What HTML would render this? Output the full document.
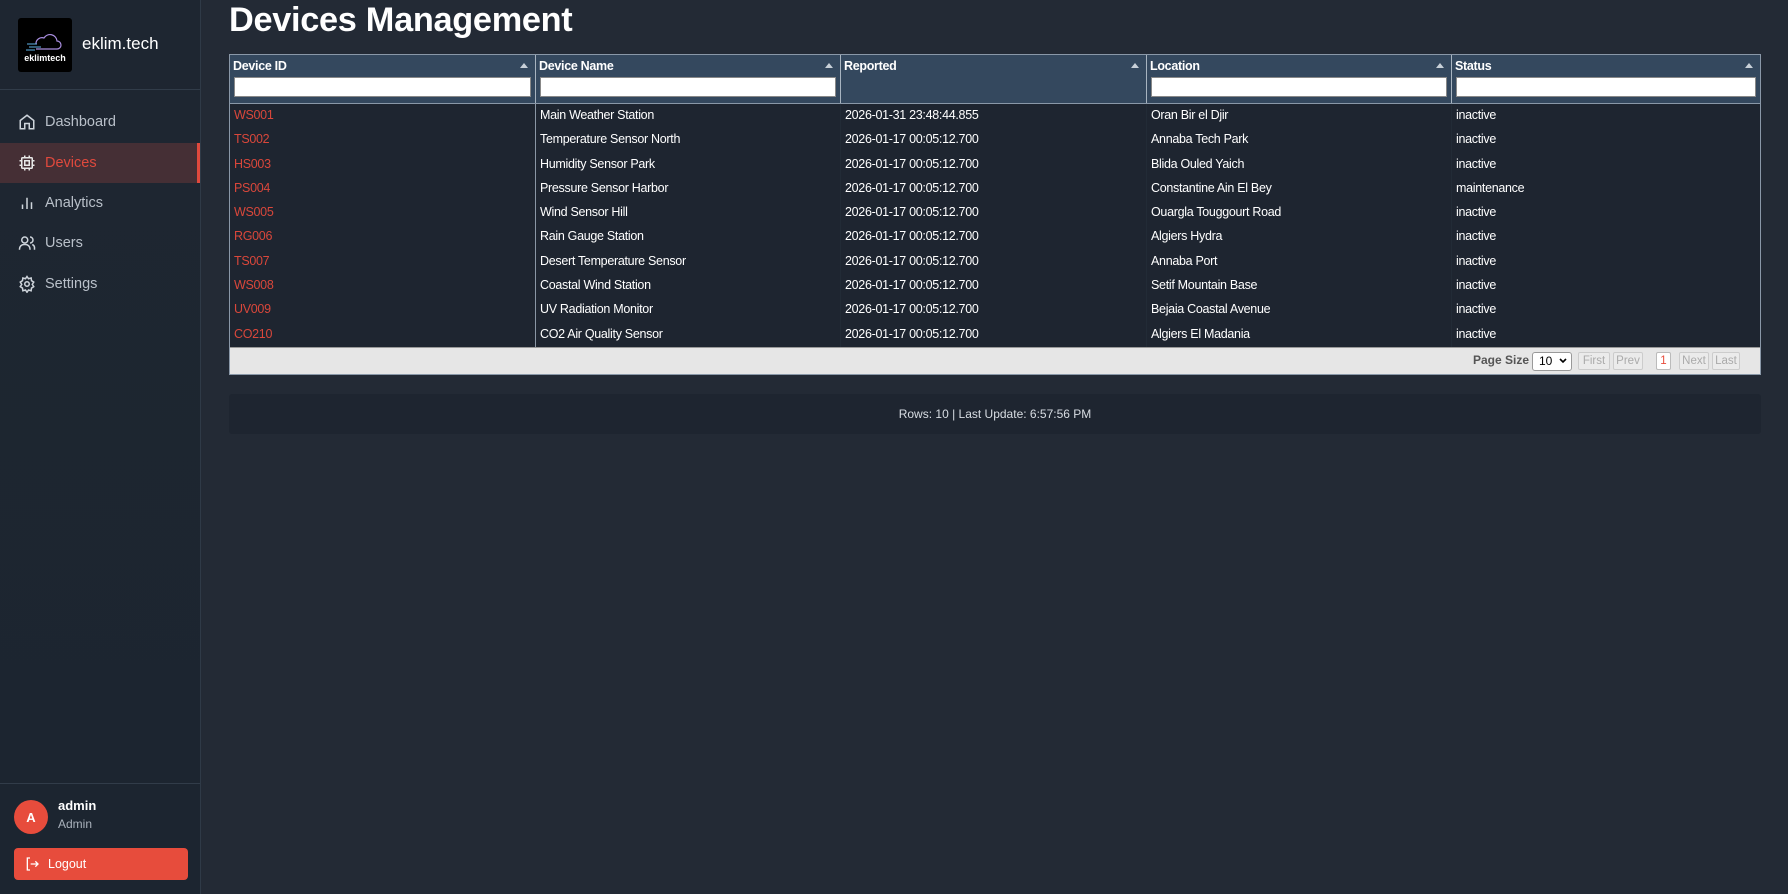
<!DOCTYPE html>
<html><head><meta charset="utf-8">
<style>
*{box-sizing:border-box;margin:0;padding:0}
body{width:1788px;height:894px;background:#232a35;font-family:"Liberation Sans",Arial,sans-serif;position:relative;overflow:hidden;color:#fff}
.sb{position:absolute;left:0;top:0;width:201px;height:894px;background:linear-gradient(180deg,#1e2631,#1c2530);border-right:1px solid #2f3a47}
.logo{position:absolute;left:18px;top:18px;width:54px;height:54px;background:#000;border-radius:3px}
.brand{position:absolute;left:82px;top:34px;font-size:17px;color:#fff}
.div1{position:absolute;left:0;top:89px;width:200px;height:1px;background:#313c49}
.nav{position:absolute;left:0;width:200px;height:40px;display:flex;align-items:center;font-size:14.5px;color:#b9c0c9}
.nav svg{position:absolute;left:18px;width:18px;height:18px}
.nav span{position:absolute;left:45px}
.nav.act{background:#452f35;color:#e0493d;border-right:3px solid #e0493d}
.div2{position:absolute;left:0;top:783px;width:200px;height:1px;background:#313c49}
.av{position:absolute;left:14px;top:800px;width:34px;height:34px;border-radius:50%;background:#e74c3c;font-size:13px;font-weight:bold;display:flex;align-items:center;justify-content:center}
.un{position:absolute;left:58px;top:798px;font-size:13px;font-weight:bold}
.ur{position:absolute;left:58px;top:817px;font-size:12px;color:#aab2bc}
.lo{position:absolute;left:14px;top:848px;width:174px;height:32px;background:#e74c3c;border-radius:4px;font-size:12.5px;display:flex;align-items:center}
.lo span{position:absolute;left:34px}
h1{position:absolute;left:229px;top:0;font-size:34.3px;font-weight:bold;letter-spacing:-.3px;line-height:40px}
.tbl{position:absolute;left:229px;top:54px;width:1532px;border:1px solid #8a98a8}
.hd{height:49px;background:#34485e;display:flex;border-bottom:1px solid #8a98a8}
.hc{position:relative;height:100%;border-right:1px solid #a8b4c0;padding:2px 3px}
.hc:last-child{border-right:none}
.hc b{font-size:12.5px;letter-spacing:-.3px}
.hc i{position:absolute;right:7px;top:8px;width:0;height:0;border-left:4px solid transparent;border-right:4px solid transparent;border-bottom:5px solid #c8d0d8}
.hc .in{position:absolute;left:4px;right:4px;top:22px;height:20px;background:#fff;border:1px solid #888}
.row{height:24.3px;display:flex;background:#1e2530;font-size:12.5px;letter-spacing:-.3px}
.row div{padding-left:4px;line-height:22px;border-right:1px solid #222b36;white-space:nowrap}
.row div:first-child{color:#d9473b;border-right:1px solid #8a96a4}
.row div:last-child{border-right:none}
.c1{width:306px}.c2{width:305px}.c3{width:306px}.c4{width:305px}.c5{flex:1}
.pg{height:27px;background:#e6e6e6;border-top:1px solid #999;position:relative;font-size:12px;color:#444}
.pg>*{position:absolute;top:4px}
.bt{height:18px;border:1px solid #ccc;border-radius:2px;color:#aaa;font-size:11.5px;line-height:16px;text-align:center;background:#ebebeb}
.sel{display:flex;align-items:center;justify-content:space-between}
.st{position:absolute;left:229px;top:394px;width:1532px;height:40px;background:#1e2530;font-size:12px;color:#d8dde3;text-align:center;line-height:40px;border-radius:3px}
</style></head><body>
<div class="sb">
 <div class="logo"><svg width="54" height="54" viewBox="0 0 54 54"><path d="M18 26 a6 6 0 0 1 8-6 a7 7 0 0 1 13 3 a4 4 0 0 1 0 8 h-21" fill="none" stroke="#a98ee0" stroke-width="1.2"/><path d="M9 26h10M11 29h12M8 32h9" stroke="#5fb4e8" stroke-width="1"/><text x="27" y="43" font-size="9" font-weight="bold" fill="#fff" text-anchor="middle" font-family="Liberation Sans">eklimtech</text></svg></div>
 <div class="brand">eklim.tech</div>
 <div class="div1"></div>
 <div class="nav" style="top:102px"><svg viewBox="0 0 24 24" fill="none" stroke="#cfd5dc" stroke-width="2"><path d="M3 10l9-7 9 7v11h-6v-7H9v7H3z"/></svg><span>Dashboard</span></div>
 <div class="nav act" style="top:143px"><svg viewBox="0 0 24 24" fill="none" stroke="#e8e8e8" stroke-width="2"><rect x="5" y="5" width="14" height="14" rx="1"/><rect x="9" y="9" width="6" height="6"/><path d="M9 2v3M15 2v3M9 19v3M15 19v3M2 9h3M2 15h3M19 9h3M19 15h3"/></svg><span>Devices</span></div>
 <div class="nav" style="top:183px"><svg viewBox="0 0 24 24" fill="none" stroke="#cfd5dc" stroke-width="2"><path d="M6 20v-6M12 20V5M18 20v-9"/></svg><span>Analytics</span></div>
 <div class="nav" style="top:223px"><svg viewBox="0 0 24 24" fill="none" stroke="#cfd5dc" stroke-width="2"><circle cx="9" cy="8" r="4"/><path d="M2 21v-1a6 6 0 0 1 6-6h2a6 6 0 0 1 6 6v1M16 4a4 4 0 0 1 0 8M19 14a5 5 0 0 1 3 5v2"/></svg><span>Users</span></div>
 <div class="nav" style="top:264px"><svg viewBox="0 0 24 24" fill="none" stroke="#cfd5dc" stroke-width="2"><circle cx="12" cy="12" r="3"/><path d="M12 2l2 3 3.5-1 .5 3.5 3 2-2 3 2 3-3 2-.5 3.5-3.5-1-2 3-2-3-3.5 1-.5-3.5-3-2 2-3-2-3 3-2 .5-3.5 3.5 1z"/></svg><span>Settings</span></div>
 <div class="div2"></div>
 <div class="av">A</div>
 <div class="un">admin</div>
 <div class="ur">Admin</div>
 <div class="lo"><svg style="position:absolute;left:10px" width="16" height="16" viewBox="0 0 24 24" fill="none" stroke="#fff" stroke-width="2"><path d="M9 3H5v18h4M10 12h11M17 8l4 4-4 4"/></svg><span>Logout</span></div>
</div>
<h1>Devices Management</h1>
<div class="tbl">
 <div class="hd">
  <div class="hc c1"><b>Device ID</b><i></i><div class="in"></div></div>
  <div class="hc c2"><b>Device Name</b><i></i><div class="in"></div></div>
  <div class="hc c3"><b>Reported</b><i></i></div>
  <div class="hc c4"><b>Location</b><i></i><div class="in"></div></div>
  <div class="hc c5"><b>Status</b><i></i><div class="in"></div></div>
 </div>
 <div class="row"><div class="c1">WS001</div><div class="c2">Main Weather Station</div><div class="c3">2026-01-31 23:48:44.855</div><div class="c4">Oran Bir el Djir</div><div class="c5">inactive</div></div>
 <div class="row"><div class="c1">TS002</div><div class="c2">Temperature Sensor North</div><div class="c3">2026-01-17 00:05:12.700</div><div class="c4">Annaba Tech Park</div><div class="c5">inactive</div></div>
 <div class="row"><div class="c1">HS003</div><div class="c2">Humidity Sensor Park</div><div class="c3">2026-01-17 00:05:12.700</div><div class="c4">Blida Ouled Yaich</div><div class="c5">inactive</div></div>
 <div class="row"><div class="c1">PS004</div><div class="c2">Pressure Sensor Harbor</div><div class="c3">2026-01-17 00:05:12.700</div><div class="c4">Constantine Ain El Bey</div><div class="c5">maintenance</div></div>
 <div class="row"><div class="c1">WS005</div><div class="c2">Wind Sensor Hill</div><div class="c3">2026-01-17 00:05:12.700</div><div class="c4">Ouargla Touggourt Road</div><div class="c5">inactive</div></div>
 <div class="row"><div class="c1">RG006</div><div class="c2">Rain Gauge Station</div><div class="c3">2026-01-17 00:05:12.700</div><div class="c4">Algiers Hydra</div><div class="c5">inactive</div></div>
 <div class="row"><div class="c1">TS007</div><div class="c2">Desert Temperature Sensor</div><div class="c3">2026-01-17 00:05:12.700</div><div class="c4">Annaba Port</div><div class="c5">inactive</div></div>
 <div class="row"><div class="c1">WS008</div><div class="c2">Coastal Wind Station</div><div class="c3">2026-01-17 00:05:12.700</div><div class="c4">Setif Mountain Base</div><div class="c5">inactive</div></div>
 <div class="row"><div class="c1">UV009</div><div class="c2">UV Radiation Monitor</div><div class="c3">2026-01-17 00:05:12.700</div><div class="c4">Bejaia Coastal Avenue</div><div class="c5">inactive</div></div>
 <div class="row"><div class="c1">CO210</div><div class="c2">CO2 Air Quality Sensor</div><div class="c3">2026-01-17 00:05:12.700</div><div class="c4">Algiers El Madania</div><div class="c5">inactive</div></div>
 <div class="pg">
  <span style="left:1243px;top:5px;font-weight:bold;font-size:12px;color:#555">Page Size</span>
  <div class="sel" style="left:1302px;width:40px;height:19px;background:#fff;border:1px solid #999;border-radius:3px;font-size:12px;color:#000;padding:0 4px 0 6px"><span>10</span><svg width="8" height="6" viewBox="0 0 8 6"><path d="M1 1l3 3 3-3" fill="none" stroke="#000" stroke-width="1.6"/></svg></div>
  <div class="bt" style="left:1348px;width:32px">First</div>
  <div class="bt" style="left:1383px;width:30px">Prev</div>
  <div class="bt" style="left:1426px;width:15px;color:#e74c3c;background:#fff;border-color:#bbb">1</div>
  <div class="bt" style="left:1449px;width:30px">Next</div>
  <div class="bt" style="left:1482px;width:28px">Last</div>
 </div>
</div>
<div class="st">Rows: 10 | Last Update: 6:57:56 PM</div>
</body></html>
